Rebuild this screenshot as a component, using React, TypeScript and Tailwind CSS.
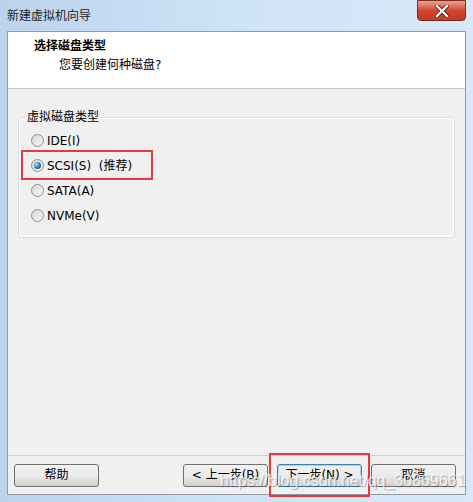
const FONT = "font-['Tahoma','DejaVu_Sans','Noto_Sans_CJK_SC',sans-serif]";

const OPTIONS = [
  { label: "IDE(I)", checked: false },
  { label: "SCSI(S)\u00a0\u00a0(推荐)", checked: true },
  { label: "SATA(A)", checked: false },
  { label: "NVMe(V)", checked: false },
];

function Radio({ checked }: { checked: boolean }) {
  return (
    <span className="relative flex h-[13px] w-[13px] items-center justify-center rounded-full border border-[#8e8f8f] bg-gradient-to-br from-[#d8d8d8] to-[#f6f6f6]">
      {checked && (
        <span className="h-[7px] w-[7px] rounded-full bg-[radial-gradient(circle_at_35%_35%,#a8e0ff,#1c6ca8_60%,#0d3f6e)]" />
      )}
    </span>
  );
}

function Button({ children, focused }: { children: React.ReactNode; focused?: boolean }) {
  return (
    <button
      className={
        "flex h-[23px] w-[85px] items-center justify-center rounded-[3px] border bg-gradient-to-b from-[#f2f2f2] via-[#ebebeb] to-[#cfcfcf] text-[12px] text-black " +
        (focused ? "border-[#3c7fb1] shadow-[inset_0_0_0_1px_#9ad8f5]" : "border-[#707070]")
      }
    >
      {children}
    </button>
  );
}

export default function App() {
  return (
    <div className={`${FONT} relative h-[502px] w-[473px] overflow-hidden bg-gradient-to-r from-[#bcd3ec] via-[#cfe3f7] to-[#d8e8f8] text-[12px] text-black`}>
      <div className="flex h-[31px] items-center justify-between pl-[7px] pr-[7px]">
        <span className="text-[12px] text-[#1e1e1e]">新建虚拟机向导</span>
        <div className="-mt-[10px] flex h-[21px] w-[49px] items-center justify-center rounded-b-[4px] border border-[#7a2a1e] bg-gradient-to-b from-[#e8a290] via-[#d2472d] to-[#c23a21]">
          <svg width="14" height="12" viewBox="0 0 14 12">
            <path d="M2 1 L12 11 M12 1 L2 11" stroke="#3b1510" strokeWidth="4" strokeLinecap="square" />
            <path d="M2 1 L12 11 M12 1 L2 11" stroke="#fff" strokeWidth="2.4" strokeLinecap="square" />
          </svg>
        </div>
      </div>

      <div className="mx-[7px] flex h-[464px] flex-col border border-[#8f9aa6] bg-[#f0f0f0]">
        <div className="flex h-[57px] flex-col border-b border-[#c9c9c9] bg-white pl-[26px] pt-[5px]">
          <span className="font-bold leading-[18px]">选择磁盘类型</span>
          <span className="pl-[25px] leading-[20px]">您要创建何种磁盘?</span>
        </div>

        <div className="relative mx-[10px] mt-[28px] h-[121px] rounded-[3px] border border-[#d5dfe5] shadow-[inset_0_0_0_1px_#fff]">
          <span className="absolute -top-[9px] left-[6px] bg-[#f0f0f0] px-[2px] leading-[16px]">虚拟磁盘类型</span>
          <div className="flex flex-col pl-[12px] pt-[10px]">
            {OPTIONS.map((o) => (
              <div key={o.label} className="flex h-[25px] items-center gap-[3px]">
                <Radio checked={o.checked} />
                <span>{o.label}</span>
              </div>
            ))}
          </div>
          <div className="pointer-events-none absolute left-[2px] top-[32px] h-[30px] w-[132px] border-2 border-[#e8383b]" />
        </div>

        <div className="mt-auto border-t border-[#d0d0d0]" />
        <div className="relative flex h-[38px] items-center pl-[6px] pr-[9px]">
          <Button>帮助</Button>
          <div className="ml-auto flex gap-[9px]">
            <Button>&lt; 上一步(B)</Button>
            <Button focused>下一步(N) &gt;</Button>
            <Button>取消</Button>
          </div>
          <div className="pointer-events-none absolute left-[261px] top-[-3px] h-[44px] w-[101px] border-2 border-[#e8383b]" />
          <span className="pointer-events-none absolute left-[212px] top-[16px] font-['Liberation_Sans',sans-serif] text-[16px] leading-[18px] text-white/80 [text-shadow:1px_1px_1px_rgba(0,0,0,0.3)]">
            https://blog.csdn.net/qq_30869661
          </span>
        </div>
      </div>
    </div>
  );
}
